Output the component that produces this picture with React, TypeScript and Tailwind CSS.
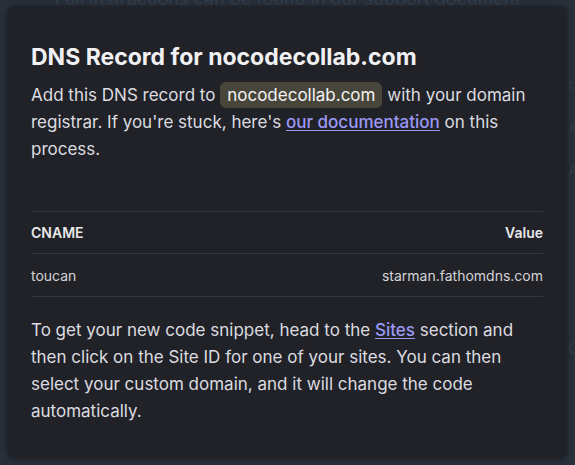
export default function App() {
  return (
    <div
      className="relative h-[465px] w-[575px] overflow-hidden bg-[#29303a]"
      style={{ fontFamily: "Inter, 'Noto Sans', sans-serif" }}
    >
      {/* page behind the dialog */}
      <div className="pt-0">
        <p className="mt-[-15px] text-center text-[18px] leading-7 text-[#363d48]">
          Full instructions can be found in our support document
        </p>
        <div className="ml-[568px] flex flex-col text-[15px] text-[#353c46]">
          <span className="mt-[62px]">t</span>
          <span className="mt-[20px]">Ac</span>
          <span className="mt-[20px]">Ac</span>
          <span className="mt-[155px]">C</span>
        </div>
      </div>

      <div className="absolute left-[7px] top-[6px] flex h-[453px] w-[560px] flex-col rounded-lg bg-[#212227] px-6 pt-[37px] shadow-[0_0_6px_rgba(0,0,0,0.35)]">
        <h2 className="text-[23px] font-bold leading-7 text-[#f1f1f3]">DNS Record for nocodecollab.com</h2>
        <p className="mt-[11px] text-[17px] leading-[27px] text-[#dcdce0]">
          Add this DNS record to{" "}
          <span className="rounded-md bg-[#48463a] px-[7px] py-[3px] text-[#f4f4f5]">nocodecollab.com</span>{" "}
          with your domain registrar. If you're stuck, here's{" "}
          <a href="#" className="font-medium text-[#9b98f5] underline underline-offset-2">
            our documentation
          </a>{" "}
          on this process.
        </p>

        <table className="mt-[48px] w-full border-collapse text-[14px]">
          <thead>
            <tr className="border-y border-[#37383e]">
              <th className="h-[42px] text-left font-semibold text-[#e8e8eb]">CNAME</th>
              <th className="h-[42px] text-right font-semibold text-[#e8e8eb]">Value</th>
            </tr>
          </thead>
          <tbody>
            <tr className="border-b border-[#37383e]">
              <td className="h-[43px] text-left text-[#d4d4d8]">toucan</td>
              <td className="h-[43px] text-right text-[#d4d4d8]">starman.fathomdns.com</td>
            </tr>
          </tbody>
        </table>

        <p className="mt-[20px] text-[17px] leading-[27px] text-[#dcdce0]">
          To get your new code snippet, head to the{" "}
          <a href="#" className="font-medium text-[#9b98f5] underline underline-offset-2">
            Sites
          </a>{" "}
          section and then click on the Site ID for one of your sites. You can then select your custom domain, and it
          will change the code automatically.
        </p>
      </div>
    </div>
  );
}
